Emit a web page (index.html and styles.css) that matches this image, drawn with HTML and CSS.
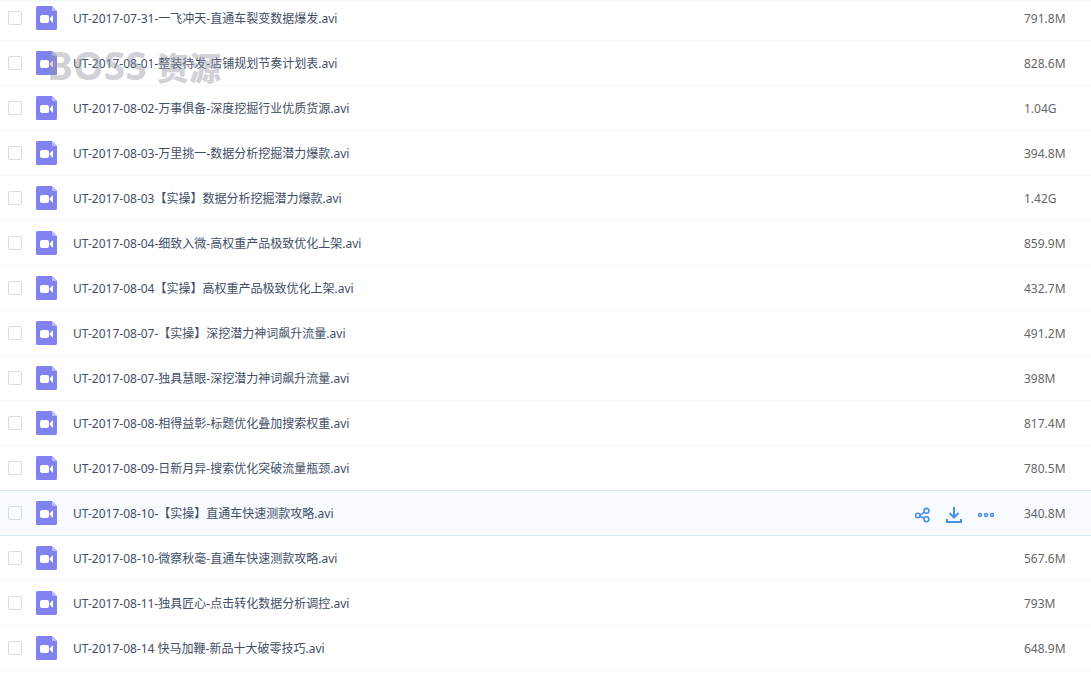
FILE: index.html
```html
<!DOCTYPE html>
<html lang="zh-CN">
<head>
    <meta charset="UTF-8">
    <title>文件列表</title>
    <link rel="stylesheet" href="styles.css">
</head>
<body>
    <svg class="sprite" aria-hidden="true">
        <symbol id="video" viewBox="0 0 21 24">
            <path d="M1.5 0H16l5 5v17.5a1.5 1.5 0 0 1-1.5 1.5h-18A1.5 1.5 0 0 1 0 22.5v-21A1.5 1.5 0 0 1 1.5 0z" fill="#8182f0"/>
            <path d="M16 0l5 5h-4a1 1 0 0 1-1-1z" fill="#b9baf8"/>
            <rect x="4" y="9" width="9" height="8" rx="2" fill="#fff"/>
            <path d="M13.5 13l2.500-3.200q1-.8 1 .4v5.600q0 1.200-1 .4z" fill="#fff"/>
        </symbol>
    </svg>

    <div class="watermark">BOSS <span class="watermark-cn">资源</span></div>

    <ul class="file-list" id="fileList"></ul>

    <template id="actions">
        <div class="actions">
            <button type="button" aria-label="分享">
                <svg width="16" height="16" viewBox="0 0 16 16" fill="none" stroke="#4a90e8" stroke-width="1.6">
                    <circle cx="3.8" cy="8.5" r="2.2"/>
                    <circle cx="12.500" cy="3.8" r="2.4"/>
                    <circle cx="12.500" cy="12.2" r="2.4"/>
                    <path d="M5.800 7.700q2.500-.5 4.600-2.700M5.800 9.200l4.600 2"/>
                </svg>
            </button>
            <button type="button" aria-label="下载">
                <svg width="16" height="16" viewBox="0 0 16 16" fill="none" stroke="#4a90e8" stroke-width="2">
                    <path d="M8 0v10.500M3.500 6L8 10.500 12.500 6M1 12v3h14v-3"/>
                </svg>
            </button>
            <button type="button" aria-label="更多">
                <svg width="16" height="16" viewBox="0 0 16 16" fill="none" stroke="#4a90e8" stroke-width="1.5">
                    <circle cx="2" cy="8" r="1.5"/>
                    <circle cx="8" cy="8" r="1.5"/>
                    <circle cx="14" cy="8" r="1.5"/>
                </svg>
            </button>
        </div>
    </template>

    <script src="script.js"></script>
</body>
</html>
```

FILE: styles.css
```css
* {
    box-sizing: border-box;
}
body {
    margin: 0;
    background: #fff;
    color: #424e67;
    font-family: "Noto Sans", "Noto Sans CJK SC", sans-serif;
    font-size: 12px;
    line-height: 20px;
}
.sprite {
    display: none;
}
.file-list {
    margin: 0;
    padding: 0;
    list-style: none;
    border-top: 1px solid #f2f6fd;
}
.file-row {
    display: flex;
    align-items: center;
    padding: 10px 0 10px 8px;
    border-bottom: 1px solid #f2f6fd;
}
.file-row:first-child {
    padding-top: 5px;
}
.file-row.active {
    margin-top: -1px;
    background: #f7faff;
    border-top: 1px solid #d9e8fb;
    border-bottom-color: #d9e8fb;
}
.file-label {
    display: flex;
    align-items: center;
    flex: 1;
    min-width: 0;
}
.check {
    appearance: none;
    width: 14px;
    height: 14px;
    margin: 0 14px 0 0;
    border: 1px solid #d3dce8;
    border-radius: 2px;
    background: #fff;
}
.active .check {
    background: transparent;
}
.file-icon {
    width: 21px;
    height: 24px;
    margin-right: 16px;
}
.file-name,
.file-size {
    padding-top: 2px;
}
.actions {
    display: flex;
    gap: 16px;
    margin-right: 30px;
    padding-top: 4px;
}
.actions button {
    display: block;
    width: 16px;
    height: 16px;
    padding: 0;
    border: none;
    background: none;
    cursor: pointer;
}
.actions svg {
    display: block;
}
.file-size {
    width: 67px;
    color: #666;
}
.watermark {
    position: absolute;
    top: 40px;
    left: 47px;
    color: rgba(150, 152, 165, 0.45);
    font-size: 39px;
    font-weight: 700;
    line-height: 50px;
    white-space: nowrap;
    pointer-events: none;
}
.watermark-cn {
    font-size: 32px;
    font-weight: 900;
}
```

FILE: script.js
```javascript
const files = [
    { name: 'UT-2017-07-31-一飞冲天-直通车裂变数据爆发.avi', size: '791.8M' },
    { name: 'UT-2017-08-01-整装待发-店铺规划节奏计划表.avi', size: '828.6M' },
    { name: 'UT-2017-08-02-万事俱备-深度挖掘行业优质货源.avi', size: '1.04G' },
    { name: 'UT-2017-08-03-万里挑一-数据分析挖掘潜力爆款.avi', size: '394.8M' },
    { name: 'UT-2017-08-03【实操】数据分析挖掘潜力爆款.avi', size: '1.42G' },
    { name: 'UT-2017-08-04-细致入微-高权重产品极致优化上架.avi', size: '859.9M' },
    { name: 'UT-2017-08-04【实操】高权重产品极致优化上架.avi', size: '432.7M' },
    { name: 'UT-2017-08-07-【实操】深挖潜力神词飙升流量.avi', size: '491.2M' },
    { name: 'UT-2017-08-07-独具慧眼-深挖潜力神词飙升流量.avi', size: '398M' },
    { name: 'UT-2017-08-08-相得益彰-标题优化叠加搜索权重.avi', size: '817.4M' },
    { name: 'UT-2017-08-09-日新月异-搜索优化突破流量瓶颈.avi', size: '780.5M' },
    { name: 'UT-2017-08-10-【实操】直通车快速测款攻略.avi', size: '340.8M', active: true },
    { name: 'UT-2017-08-10-微察秋毫-直通车快速测款攻略.avi', size: '567.6M' },
    { name: 'UT-2017-08-11-独具匠心-点击转化数据分析调控.avi', size: '793M' },
    { name: 'UT-2017-08-14 快马加鞭-新品十大破零技巧.avi', size: '648.9M' }
];

const list = document.getElementById('fileList');
const actions = document.getElementById('actions');

files.forEach(file => {
    const row = document.createElement('li');
    row.className = file.active ? 'file-row active' : 'file-row';
    row.innerHTML = `
        <label class="file-label">
            <input type="checkbox" class="check">
            <svg class="file-icon" aria-hidden="true"><use href="#video"/></svg>
            <span class="file-name">${file.name}</span>
        </label>
        <span class="file-size">${file.size}</span>
    `;
    if (file.active) {
        row.insertBefore(actions.content.cloneNode(true), row.querySelector('.file-size'));
    }
    list.appendChild(row);
});
```
